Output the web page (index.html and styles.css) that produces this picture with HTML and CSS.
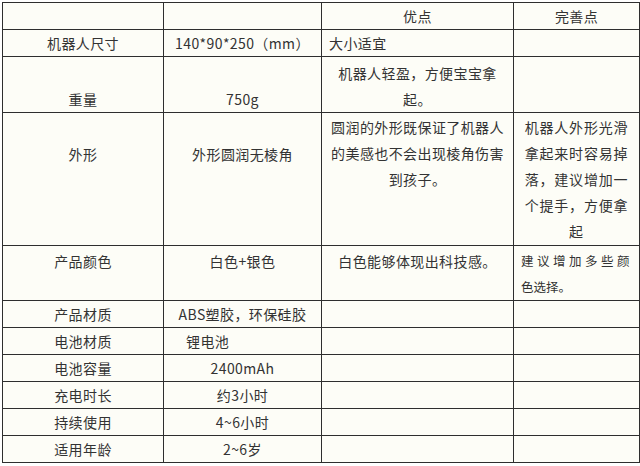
FILE: index.html
```html
<!DOCTYPE html>
<html lang="zh-CN">
<head>
<meta charset="utf-8">
<title>机器人参数</title>
<link rel="stylesheet" href="styles.css">
</head>
<body>
<table class="spec">
  <colgroup>
    <col class="c1">
    <col class="c2">
    <col class="c3">
    <col class="c4">
  </colgroup>
  <tr class="r27">
    <td></td>
    <td></td>
    <td>优点</td>
    <td>完善点</td>
  </tr>
  <tr class="r27">
    <td>机器人尺寸</td>
    <td>140*90*250（mm）</td>
    <td class="left pl7">大小适宜</td>
    <td></td>
  </tr>
  <tr class="r55">
    <td class="top pt29">重量</td>
    <td class="top pt29">750g</td>
    <td class="top pt3">机器人轻盈，方便宝宝拿起。</td>
    <td></td>
  </tr>
  <tr class="r134">
    <td class="top pt28">外形</td>
    <td class="top pt28">外形圆润无棱角</td>
    <td class="top pt1 lh265">圆润的外形既保证了机器人的美感也不会出现棱角伤害到孩子。</td>
    <td class="top pt1 lh265 wide">机器人外形光滑拿起来时容易掉落，建议增加一个提手，方便拿起</td>
  </tr>
  <tr class="r54">
    <td class="top pt2">产品颜色</td>
    <td class="top pt2">白色+银色</td>
    <td class="top pt2">白色能够体现出科技感。</td>
    <td class="top pt2 left small"><span class="spread">建议增加多些颜</span><br>色选择。</td>
  </tr>
  <tr class="r28">
    <td>产品材质</td>
    <td>ABS塑胶，环保硅胶</td>
    <td></td>
    <td></td>
  </tr>
  <tr class="r27">
    <td>电池材质</td>
    <td class="left pl22">锂电池</td>
    <td></td>
    <td></td>
  </tr>
  <tr class="r28">
    <td>电池容量</td>
    <td>2400mAh</td>
    <td></td>
    <td></td>
  </tr>
  <tr class="r28">
    <td>充电时长</td>
    <td>约3小时</td>
    <td></td>
    <td></td>
  </tr>
  <tr class="r28">
    <td>持续使用</td>
    <td>4~6小时</td>
    <td></td>
    <td></td>
  </tr>
  <tr class="r28">
    <td>适用年龄</td>
    <td>2~6岁</td>
    <td></td>
    <td></td>
  </tr>
</table>
</body>
</html>
```
FILE: styles.css
```css
html, body {
  margin: 0;
  padding: 0;
  background: #ffffff;
}

body {
  padding: 2px 0 0 2px;
  font-family: "Noto Sans CJK SC", sans-serif;
  color: #333333;
}

.spec {
  border-collapse: collapse;
  table-layout: fixed;
  width: 637px;
  background: #fdfdf7;
}

.c1 { width: 161px; }
.c2 { width: 158px; }
.c3 { width: 192px; }
.c4 { width: 126px; }

.spec td {
  border: 1px solid #2e2e2e;
  padding: 0 8px;
  font-size: 14px;
  line-height: 26px;
  letter-spacing: 0.4px;
  text-align: center;
  vertical-align: middle;
  overflow: hidden;
  word-break: normal;
  line-break: strict;
}

.r27 { height: 26px; }
.r28 { height: 27px; }
.r54 { height: 53px; }
.r55 { height: 54px; }
.r134 { height: 133px; }

.spec td.top { vertical-align: top; }
.spec td.left { text-align: left; }
.spec td.pl7 { padding-left: 7px; }
.spec td.pl22 { padding-left: 22px; }
.spec td.pt1 { padding-top: 1px; }
.spec td.pt2 { padding-top: 2px; }
.spec td.pt3 { padding-top: 3px; }
.spec td.pt28 { padding-top: 28px; }
.spec td.pt29 { padding-top: 29px; }
.spec td.lh265 { line-height: 26px; }
.spec td.wide { letter-spacing: 0.8px; padding: 1px 6px 0; }

.spec td.small {
  font-size: 12.5px;
  letter-spacing: 0;
  padding-left: 7px;
  padding-right: 0;
}

.spread {
  letter-spacing: 3.5px;
  white-space: nowrap;
}
```
